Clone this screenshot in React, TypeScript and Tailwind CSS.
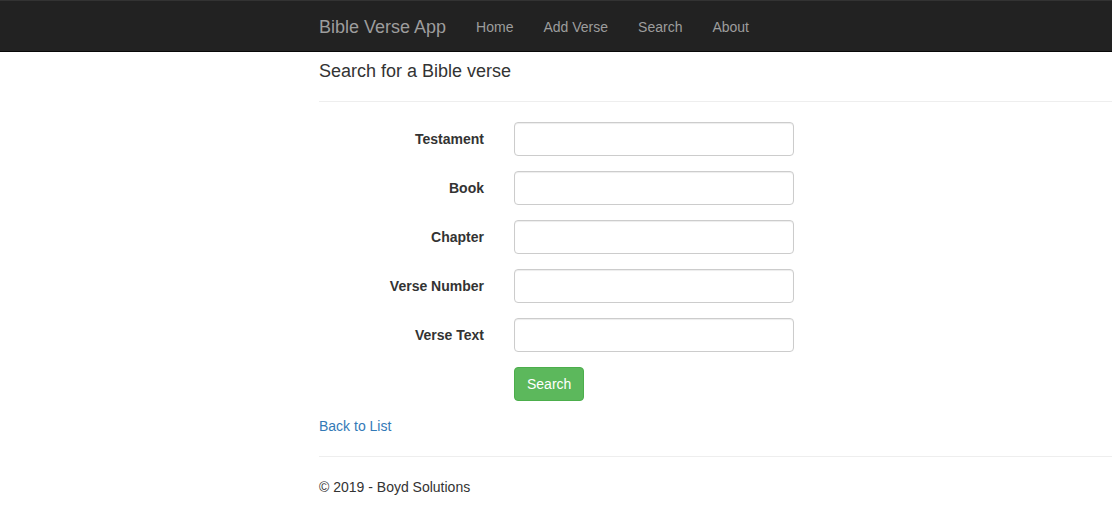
import React from 'react';

const fields = ['Testament', 'Book', 'Chapter', 'Verse Number', 'Verse Text'];

const navLinks = ['Home', 'Add Verse', 'Search', 'About'];

const App: React.FC = () => {
  return (
    <div className="min-h-[532px] w-full overflow-hidden bg-white text-[14px] leading-[20px] text-[#333] font-['Liberation_Sans',Arial,sans-serif]">
      {/* navbar */}
      <nav className="h-[52px] bg-[#222] border-t border-t-[#333] border-b border-b-[#080808]">
        <div className="flex h-[50px] items-center pt-[2px] pl-[304px]">
          <a className="px-[15px] text-[18px] leading-[20px] text-[#9d9d9d]">Bible Verse App</a>
          <ul className="flex">
            {navLinks.map((l) => (
              <li key={l}>
                <a className="block px-[15px] py-[15px] text-[#9d9d9d]">{l}</a>
              </li>
            ))}
          </ul>
        </div>
      </nav>

      <div className="pl-[319px]">
        <h4 className="mt-[10px] mb-[10px] text-[18px] leading-[19.8px] font-normal">Search for a Bible verse</h4>
        <hr className="mt-[19px] mb-[20px] border-t border-[#eee]" />

        <form className="-ml-[15px]">
          {fields.map((f) => (
            <div key={f} className="flex mb-[15px]">
              <label className="w-[195px] shrink-0 px-[15px] pt-[7px] text-right font-bold">{f}</label>
              <div className="px-[15px]">
                <input
                  type="text"
                  className="block h-[34px] w-[280px] rounded-[4px] border border-[#ccc] bg-white px-[12px] py-[6px] shadow-[inset_0_1px_1px_rgba(0,0,0,0.075)] outline-none"
                />
              </div>
            </div>
          ))}
          <div className="flex mb-[15px]">
            <div className="w-[195px] shrink-0" />
            <div className="px-[15px]">
              <button
                type="button"
                className="h-[34px] rounded-[4px] border border-[#4cae4c] bg-[#5cb85c] px-[12px] py-[6px] text-[14px] leading-[20px] text-white"
              >
                Search
              </button>
            </div>
          </div>
        </form>

        <div>
          <a className="text-[#337ab7]">Back to List</a>
        </div>

        <hr className="mt-[20px] mb-[20px] border-t border-[#eee]" />
        <footer>
          <p>© 2019 - Boyd Solutions</p>
        </footer>
      </div>
    </div>
  );
};

export default App;
